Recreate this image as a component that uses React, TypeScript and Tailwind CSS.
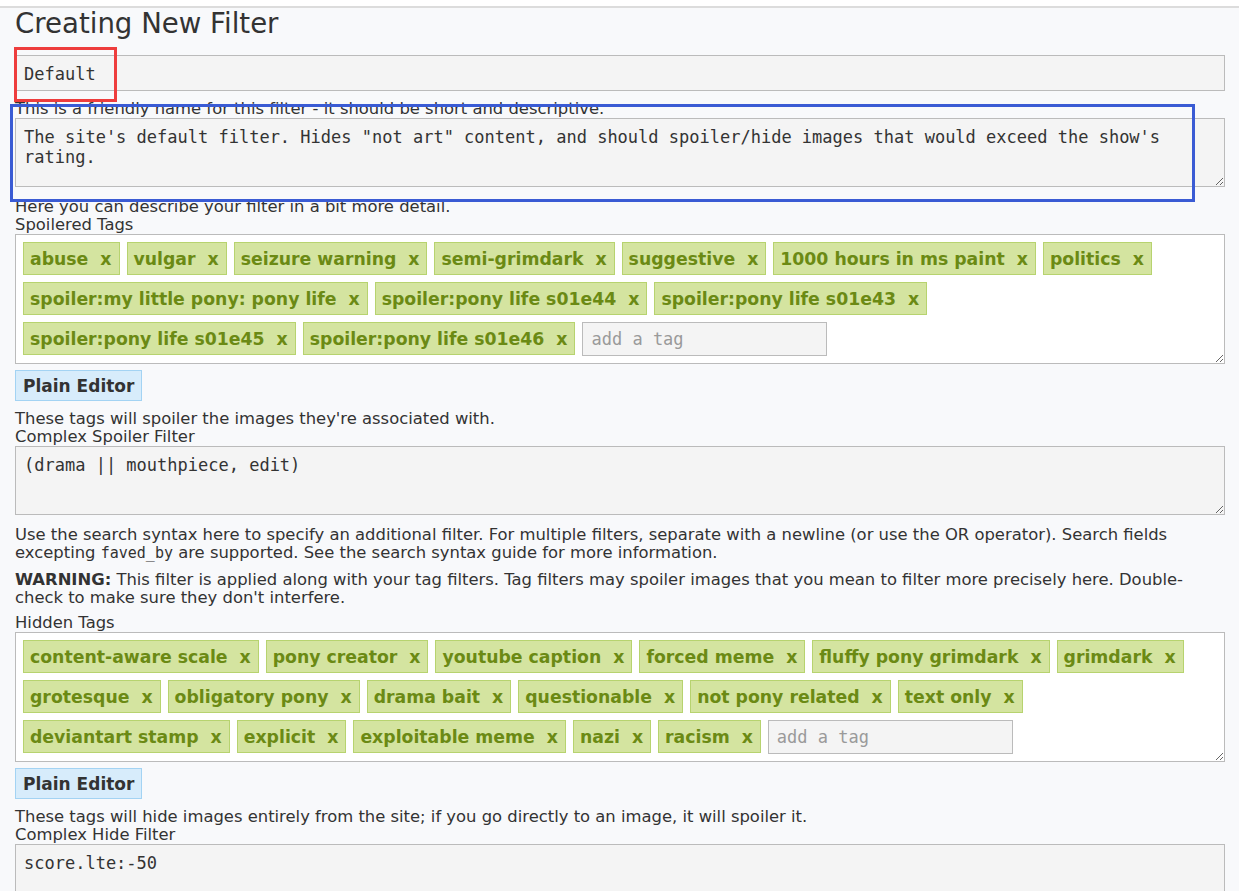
const spoileredTags = [
  "abuse",
  "vulgar",
  "seizure warning",
  "semi-grimdark",
  "suggestive",
  "1000 hours in ms paint",
  "politics",
  "spoiler:my little pony: pony life",
  "spoiler:pony life s01e44",
  "spoiler:pony life s01e43",
  "spoiler:pony life s01e45",
  "spoiler:pony life s01e46",
];

const hiddenTags = [
  "content-aware scale",
  "pony creator",
  "youtube caption",
  "forced meme",
  "fluffy pony grimdark",
  "grimdark",
  "grotesque",
  "obligatory pony",
  "drama bait",
  "questionable",
  "not pony related",
  "text only",
  "deviantart stamp",
  "explicit",
  "exploitable meme",
  "nazi",
  "racism",
];

const Tag = ({ name }: { name: string }) => (
  <span className="flex h-[33px] items-center border border-[#b7d36f] bg-[#d4e4a0] pl-[6px] pr-[7px] text-[17.3px] font-bold text-[#6b8a14]">
    {name}
    <span className="ml-[12px]">x</span>
  </span>
);

const TagBox = ({ tags }: { tags: string[] }) => (
  <div className="h-[130px] resize-y overflow-auto border border-[#bbb] bg-white p-[7px] pr-[22px]">
    <div className="flex flex-wrap items-start gap-[7px]">
      {tags.map((t) => (
        <Tag key={t} name={t} />
      ))}
      <input
        placeholder="add a tag"
        className="h-[34px] w-[245px] border border-[#bbb] bg-[#f4f4f4] px-[8px] font-['DejaVu_Sans_Mono',monospace] text-[17px] text-[#333] outline-none placeholder:text-[#9a9a9a]"
      />
    </div>
  </div>
);

const PlainEditor = () => (
  <button className="mt-[6px] block h-[31px] border border-[#a3d3f3] bg-[#d7ecfb] px-[7px] text-[17px] font-bold text-[#333]">
    Plain Editor
  </button>
);

const Area = ({ value }: { value: string }) => (
  <textarea
    readOnly
    defaultValue={value}
    className="block h-[69px] w-full resize-y border border-[#bbb] bg-[#f4f4f4] p-[8px] font-['DejaVu_Sans_Mono',monospace] text-[17px] leading-[20px] text-[#333] outline-none"
  />
);

export default function App() {
  return (
    <div className="relative min-h-screen bg-[#f8f9fb] font-['DejaVu_Sans',Verdana,sans-serif] text-[16.4px] leading-[18px] text-[#333]">
      <div className="h-[8px] border-b-2 border-[#dcdcdc] bg-white" />

      <div className="pl-[15px] pr-[14px]">
        <h1 className="text-[27.6px] leading-[32px] font-normal">Creating New Filter</h1>

        <input
          readOnly
          value="Default"
          className="mt-[15px] block h-[36px] w-full border border-[#bbb] bg-[#f4f4f4] px-[8px] pt-[1px] font-['DejaVu_Sans_Mono',monospace] text-[17px] text-[#333] outline-none"
        />
        <p className="mt-[9px]">This is a friendly name for this filter - it should be short and descriptive.</p>
        <Area value={`The site's default filter. Hides "not art" content, and should spoiler/hide images that would exceed the show's rating.`} />
        <p className="mt-[11px]">Here you can describe your filter in a bit more detail.</p>

        <p>Spoilered Tags</p>
        <TagBox tags={spoileredTags} />
        <PlainEditor />
        <p className="mt-[9px]">These tags will spoiler the images they're associated with.</p>

        <p>Complex Spoiler Filter</p>
        <Area value="(drama || mouthpiece, edit)" />
        <p className="mt-[11px]">
          Use the search syntax here to specify an additional filter. For multiple filters, separate with a newline (or use
          the OR operator). Search fields excepting{" "}
          <code className="font-['DejaVu_Sans_Mono',monospace] text-[15px]">faved_by</code> are supported. See the search
          syntax guide for more information.
        </p>
        <p className="mt-[9px]">
          <strong>WARNING:</strong> This filter is applied along with your tag filters. Tag filters may spoiler images that
          you mean to filter more precisely here. Double-check to make sure they don't interfere.
        </p>

        <p className="mt-[7px]">Hidden Tags</p>
        <TagBox tags={hiddenTags} />
        <PlainEditor />
        <p className="mt-[9px]">These tags will hide images entirely from the site; if you go directly to an image, it will spoiler it.</p>

        <p>Complex Hide Filter</p>
        <Area value="score.lte:-50" />
        <div className="h-[40px]" />
      </div>

      {/* annotation boxes drawn over the form */}
      <div className="absolute left-[14px] top-[47px] h-[55px] w-[103px] border-[3px] border-[#ee3d3d]" />
      <div className="absolute left-[10px] top-[104px] h-[98px] w-[1185px] border-[3px] border-[#3a5bd4]" />
    </div>
  );
}
